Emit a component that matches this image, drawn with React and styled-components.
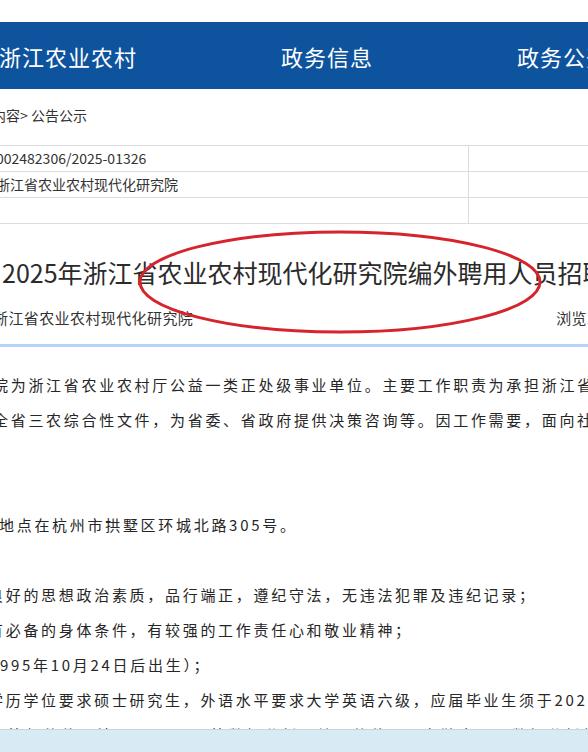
import styled, { createGlobalStyle } from "styled-components";

const GlobalStyle = createGlobalStyle`
  html, body {
    margin: 0;
    padding: 0;
    background: #fff;
  }
  body {
    overflow: hidden;
    font-family: "Noto Sans CJK SC", "Microsoft YaHei", sans-serif;
    color: #333;
  }
`;

const Page = styled.div`
  position: relative;
  width: 588px;
  height: 752px;
  overflow: hidden;
  white-space: nowrap;
`;

const Nav = styled.nav`
  margin: 22px 0 0 -1px;
  height: 67px;
  background: #0e539e;
  display: flex;
  align-items: center;
  gap: 144px;
`;

const NavItem = styled.a`
  flex: none;
  color: #fff;
  font-size: 22px;
  letter-spacing: 1px;
  text-decoration: none;
`;

const Crumb = styled.div`
  margin: 16px 0 0 -8px;
  font-size: 14px;
  line-height: 20px;
  color: #333;
`;

const InfoTable = styled.div`
  margin: 20px 0 0 -6px;
  width: 720px;
  display: grid;
  grid-template-columns: 474px 1fr;
  border-top: 1px solid #dcdcdc;
`;

const Cell = styled.div`
  height: 25px;
  border-bottom: 1px solid #dcdcdc;
  border-left: ${(p) => (p.$divider ? "1px solid #dcdcdc" : "none")};
  padding-left: 2px;
  font-size: 14px;
  line-height: 25px;
  color: #333;
`;

const Title = styled.h1`
  margin: 30px 0 0 2px;
  font-size: 25px;
  font-weight: normal;
  line-height: 36px;
  color: #2b2b2b;
`;

const Meta = styled.div`
  margin: 17px 0 0 -7px;
  display: flex;
  gap: 363px;
  font-size: 15px;
  letter-spacing: 0.4px;
  line-height: 22px;
  color: #333;
`;

const Divider = styled.hr`
  margin: 15px 0 0;
  border: none;
  height: 3px;
  background: #b3d4f4;
`;

const Body = styled.div`
  margin-top: 20px;
  font-size: 15px;
  line-height: 35px;
  letter-spacing: 2.7px;
  color: #262626;
`;

const Line = styled.p`
  margin: 0 0 0 ${(p) => p.$shift || 0}px;
  height: 35px;
`;

const Mark = styled.svg`
  position: absolute;
  left: 0;
  top: 0;
  pointer-events: none;
`;

const BottomBar = styled.div`
  position: absolute;
  left: 0;
  right: 0;
  bottom: 0;
  height: 22px;
  background: #d8eaf3;
  border-top: 1px solid #c6d6df;
`;

const rows = [
  ["002482306/2025-01326", ""],
  ["浙江省农业农村现代化研究院", ""],
  ["", ""],
];

const lines = [
  { shift: -7, text: "院为浙江省农业农村厅公益一类正处级事业单位。主要工作职责为承担浙江省农业农村" },
  { shift: -7, text: "全省三农综合性文件，为省委、省政府提供决策咨询等。因工作需要，面向社会公开" },
  { shift: 0, text: "" },
  { shift: 0, text: "" },
  { shift: -1, text: "地点在杭州市拱墅区环城北路305号。" },
  { shift: 0, text: "" },
  { shift: -12, text: "良好的思想政治素质，品行端正，遵纪守法，无违法犯罪及违纪记录；" },
  { shift: -12, text: "有必备的身体条件，有较强的工作责任心和敬业精神；" },
  { shift: -11, text: "1995年10月24日后出生）；" },
  { shift: -12, text: "学历学位要求硕士研究生，外语水平要求大学英语六级，应届毕业生须于2026年" },
  { shift: 8, text: "算机软件，精通Stata、R等数据分析及绘图软件，具有独立开展数据分析能力" },
];

export default function App() {
  return (
    <Page>
      <GlobalStyle />
      <Nav>
        <NavItem>浙江农业农村</NavItem>
        <NavItem>政务信息</NavItem>
        <NavItem>政务公开</NavItem>
      </Nav>
      <Crumb>内容&gt; 公告公示</Crumb>
      <InfoTable>
        {rows.map((r, i) => [
          <Cell key={i + "a"}>{r[0]}</Cell>,
          <Cell key={i + "b"} $divider>{r[1]}</Cell>,
        ])}
      </InfoTable>
      <Title>2025年浙江省农业农村现代化研究院编外聘用人员招聘公告</Title>
      <Meta>
        <span>浙江省农业农村现代化研究院</span>
        <span>浏览次数：</span>
      </Meta>
      <Divider />
      <Body>
        {lines.map((l, i) => (
          <Line key={i} $shift={l.shift}>{l.text}</Line>
        ))}
      </Body>
      <Mark width="588" height="752" viewBox="0 0 588 752">
        <ellipse cx="340" cy="282" rx="200" ry="50" fill="none" stroke="#d6242d" strokeWidth="3" />
      </Mark>
      <BottomBar />
    </Page>
  );
}
